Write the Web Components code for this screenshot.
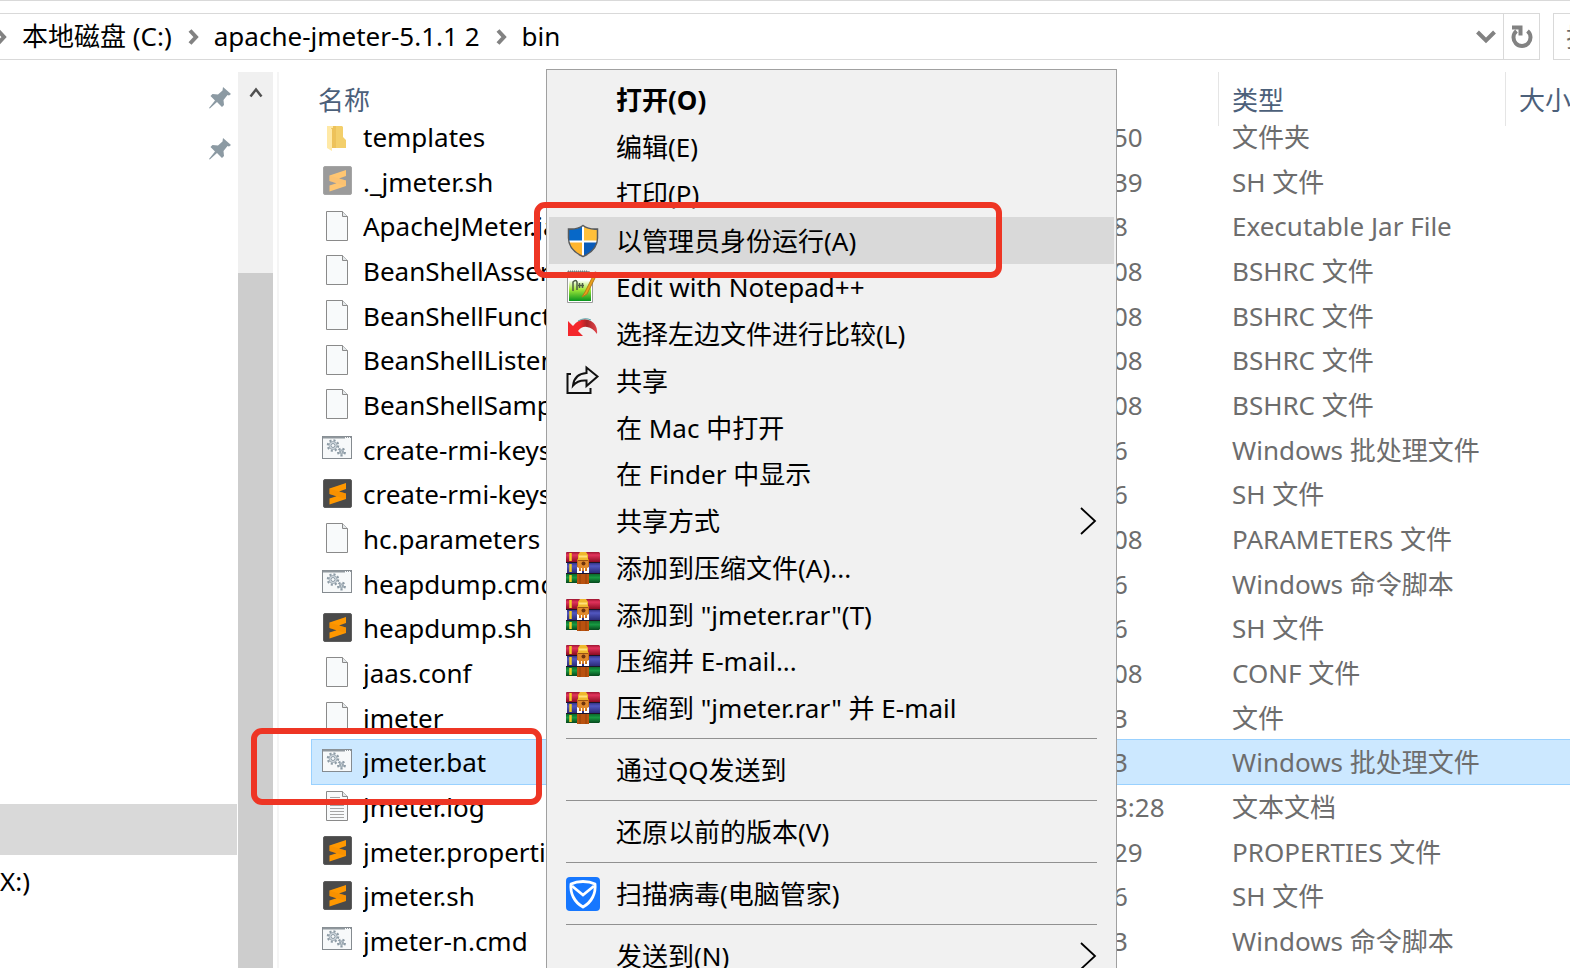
<!DOCTYPE html>
<html lang="zh-CN">
<head>
<meta charset="utf-8">
<title>bin</title>
<style>
  html, body {
    height: 100%;
    margin: 0;
  }
  body {
    overflow: hidden;
    background: #ffffff;
    color: #000000;
    font: 26px/34px "Noto Sans", "Noto Sans CJK SC", sans-serif;
  }
</style>
</head>
<body>
<explorer-window>
  <address-bar slot="address">
    <a slot="crumb" href="#c">本地磁盘 (C:)</a>
    <a slot="crumb" href="#jmeter">apache-jmeter-5.1.1 2</a>
    <a slot="crumb" href="#bin">bin</a>
  </address-bar>
  <nav-pane slot="nav"></nav-pane>
  <scroll-strip slot="nav"></scroll-strip>
  <file-list slot="files"></file-list>
  <context-menu slot="overlay"></context-menu>
  <mark-box slot="overlay" class="mark-admin"></mark-box>
  <mark-box slot="overlay" class="mark-file"></mark-box>
</explorer-window>

<script>
const gear = (cx, cy, r) => `
  <circle cx="${cx}" cy="${cy}" r="${r}" fill="none" stroke="#8d9ba5" stroke-width="2.500" stroke-dasharray="2 1.900"/>
  <circle cx="${cx}" cy="${cy}" r="${r - 1}" fill="#d3dbe1" stroke="#a3afb8"/>
  <circle cx="${cx}" cy="${cy}" r="${r / 2 - 0.5}" fill="#f5f8fa" stroke="#8d9ba5"/>`;

const sublime = `
  <rect x="0.5" y="0.5" width="28" height="28" rx="1.5" fill="#4a4a4a" stroke="#5d5d5d"/>
  <path d="M6.5 9.5 23 4v6l-7 2.5 7 2V20L6.5 25.5v-6l7-2.3-7-2.2z" fill="#ff9800"/>
  <path d="M6.5 15 13.5 17.2 23 20 23 14.5 16 12.5 6.5 9.5z" fill="#f08a00" opacity=".45"/>`;

const page = `
  <path d="M3.5.5h16l5 5v24h-21z" fill="#f8fafb" stroke="#8a8a8a"/>
  <path d="M19.5.5v5h5" fill="#e4e8ea" stroke="#8a8a8a"/>`;

const icons = {
  folder: { w: 29, h: 31, body: `
    <g transform="translate(0 4)">
      <path d="M8 1h11l1 1v10l3 3v8H8z" fill="#f3cf6b"/>
      <path d="M8 1h5v22H8z" fill="#edc25a"/>
      <path d="M4 1.5 9 4v22l-5-3z" fill="#ffe9a6"/>
      <path d="M4 1h6v2H4z" fill="#ffe9a6"/>
    </g>` },
  sublime: { w: 29, h: 29, body: sublime },
  faded: { w: 29, h: 29, body: `<g opacity=".55">${sublime}</g>` },
  page: { w: 29, h: 30, body: page },
  text: { w: 29, h: 30, body: page + `
    <path d="M7 6.500h10M7 10.500h14M7 14.500h14M7 17.500h14M7 20.500h14M7 23.500h14M7 26.500h14" stroke="#a5a5a5"/>` },
  batch: { w: 30, h: 25, body: `
    <g transform="translate(0 2)">
      <rect x=".5" y=".5" width="29" height="22" fill="#f7f9fa" stroke="#858b90"/>
      <path d="M1 1.500h22" stroke="#8f979d" stroke-width="2"/>
      <path d="M24 1.500h5" stroke="#8f979d" stroke-dasharray="1 1"/>
      ${gear(11, 9.5, 5)}${gear(19.5, 16, 3.2)}
    </g>` },
  shield: { w: 34, h: 34, body: `
    <clipPath id="s"><path d="M17 1.500c4 3 9 4 14.500 3.500V14C31.500 23 25 29 17 32.500 9 29 2.500 23 2.500 14V5C8 5.500 13 4.500 17 1.500z"/></clipPath>
    <g clip-path="url(#s)">
      <path d="M0 0h17v17H0z" fill="#0768c8"/><path d="M17 0h17v17H17z" fill="#ffc03a"/>
      <path d="M0 17h17v17H0z" fill="#ffb52e"/><path d="M17 17h17v17H17z" fill="#0a5bb8"/>
      <path d="M17 0v34M0 17.500h34" stroke="#fff" stroke-width="2"/>
    </g>
    <path d="M17 1.500c4 3 9 4 14.500 3.500V14C31.500 23 25 29 17 32.500 9 29 2.500 23 2.500 14V5C8 5.500 13 4.500 17 1.500z" fill="none" stroke="#585b5e" stroke-width="1.500"/>` },
  notepad: { w: 34, h: 34, body: `
    <linearGradient id="n" x2="0" y2="1"><stop offset="0.200" stop-color="#fff"/><stop offset="0.550" stop-color="#a4e93a"/><stop offset="1" stop-color="#08951e"/></linearGradient>
    <path d="M1.500 1.500h22l3 4v27h-25z" fill="#fff" stroke="#9a9a9a"/>
    <path d="M3 5h22v26H3z" fill="url(#n)"/>
    <path d="M2 1.500h20" stroke="#777" stroke-width="2" stroke-dasharray="1 1"/>
    <path d="M7 21v-9q3-3 4 0v8M12 15.500h6M13.500 13v5M16.500 13v5" fill="none" stroke="#4d5d44" stroke-width="1.500"/>
    <path d="M28 4 19 22l-3 5 5-3L30 6z" fill="#e9a11c" stroke="#b67b18"/>
    <path d="M27.500 4 29 1.500l3 1-2 4z" fill="#c52a35"/>` },
  compare: { w: 34, h: 34, body: `
    <linearGradient id="c"><stop offset="0.400" stop-color="#f4272c"/><stop offset="0.650" stop-color="#a92428"/><stop offset="1" stop-color="#e0444a"/></linearGradient>
    <path d="M2 4v15h15l-5-5q4-5 9-4 6 1 10 7 1-9-6-13Q15-1 7 9z" fill="url(#c)"/>
    <path d="M12 4q7-4 13-1" fill="none" stroke="#58a5aa"/>` },
  share: { w: 34, h: 34, body: `
    <path d="M5 10H1.500v19h23v-5" fill="none" stroke="#111" stroke-width="2"/>
    <path d="M7 21.500C8 13 13 9.500 20.500 9V3.500l11 9-11 9.500v-5.500C15 16 10 18 7 21.500z" fill="none" stroke="#111" stroke-width="2"/>` },
  rar: { w: 34, h: 34, body: `
    <linearGradient id="r" x2="0" y2="1"><stop offset="0" stop-color="#9c1530"/><stop offset=".3" stop-color="#e2335c"/><stop offset="1" stop-color="#8c0c22"/></linearGradient>
    <linearGradient id="b" x2="0" y2="1"><stop offset="0" stop-color="#34348a"/><stop offset=".3" stop-color="#5257c0"/><stop offset="1" stop-color="#2b2b78"/></linearGradient>
    <linearGradient id="g" x2="0" y2="1"><stop offset="0" stop-color="#0b6a2c"/><stop offset=".4" stop-color="#189a42"/><stop offset="1" stop-color="#06471c"/></linearGradient>
    <path d="M0 2q0-1 1-1h32l1 1v9H0z" fill="url(#r)"/>
    <path d="M1 12h33v10H1z" fill="url(#b)"/>
    <path d="M0 23h34v8l-1 1H0z" fill="url(#g)"/>
    <path d="M0 11.500h34M0 22.500h34" stroke="#1d1525"/>
    <path d="M4.500 2v8M4.500 13v8M4.500 24v7" stroke="#f2cd26" stroke-width="2.500"/>
    <path d="M11 8h12v12H11z" fill="#c9701b"/>
    <path d="M12 10V4l2-3h6l2 3v6z" fill="#efb82d"/>
    <path d="M13 5.500h8" stroke="#ffe07a" stroke-width="2"/>
    <path d="M12 9.500h10" stroke="#9a5414"/>
    <path d="M12 10h10v6l-3 3h-4l-3-3z" fill="#e08a2c"/>
    <circle cx="17.500" cy="12.500" r="2" fill="#6f340d"/>
    <path d="M11 23h12v10H11z" fill="#b9520f"/>
    <path d="M14 23v10M20 23v10" stroke="#94400b"/>
    <path d="M11 16v6h12v-6l-2 1v3h-2v-3h-1v5h-2v-5h-1v3h-2v-3z" fill="#fff"/>` },
  guard: { w: 34, h: 34, body: `
    <rect width="34" height="34" rx="4" fill="#1677ff"/>
    <path d="M17 4.500c4 0 8 .5 12 2.500 1 9-3 18-12 23C8 25 4 16 5 7c4-2 8-2.500 12-2.500z" fill="none" stroke="#fff" stroke-width="2.800" stroke-linejoin="round"/>
    <path d="M6 9l11 9 11-9" fill="none" stroke="#fff" stroke-width="2.800"/>` },
};

class UiIcon extends HTMLElement {
  connectedCallback() {
    const icon = icons[this.getAttribute('name')];
    this.attachShadow({ mode: 'open' }).innerHTML = `
      <style>
        :host { display: block; flex: none; }
        svg { display: block; }
      </style>
      <svg width="${icon.w}" height="${icon.h}" viewBox="0 0 ${icon.w} ${icon.h}" aria-hidden="true">${icon.body}</svg>
    `;
  }
}
customElements.define('ui-icon', UiIcon);

class ExplorerWindow extends HTMLElement {
  connectedCallback() {
    this.attachShadow({ mode: 'open' }).innerHTML = `
      <style>
        :host {
          display: flex;
          flex-direction: column;
          position: relative;
          height: 100%;
          overflow: hidden;
        }
        .body {
          display: flex;
          flex: 1;
          min-height: 0;
        }
        ::slotted(address-bar) { margin-bottom: 12px; }
        ::slotted(file-list) { flex: 1; min-width: 0; }
        ::slotted(context-menu) {
          position: absolute;
          left: 546px;
          top: 69px;
        }
        ::slotted(mark-box) { position: absolute; }
        ::slotted(.mark-admin) {
          left: 534px;
          top: 202px;
          width: 468px;
          height: 76px;
        }
        ::slotted(.mark-file) {
          left: 251px;
          top: 728px;
          width: 291px;
          height: 77px;
        }
      </style>
      <slot name="address"></slot>
      <div class="body">
        <slot name="nav"></slot>
        <slot name="files"></slot>
      </div>
      <slot name="overlay"></slot>
    `;
  }
}
customElements.define('explorer-window', ExplorerWindow);

class AddressBar extends HTMLElement {
  connectedCallback() {
    const root = this.attachShadow({ mode: 'open' });
    root.innerHTML = `
      <style>
        :host {
          display: flex;
          border-top: 1px solid #d9d9d9;
          padding-top: 12px;
        }
        .path {
          display: flex;
          flex: 1;
          align-items: center;
          box-sizing: border-box;
          height: 47px;
          border: 1px solid #d9d9d9;
          border-left: 0;
        }
        .crumbs { display: flex; flex: 1; align-items: center; margin-left: -4px; padding-bottom: 2px; }
        .crumb { display: flex; align-items: center; }
        .crumb svg { margin: 2px 15px 0 0; }
        .crumb + .crumb svg { margin-left: 16px; }
        ::slotted(a) { color: inherit; text-decoration: none; }
        button {
          display: flex;
          align-items: center;
          justify-content: center;
          height: 45px;
          padding: 0;
          border: 0;
          background: none;
        }
        .drop { width: 34px; }
        .refresh { width: 36px; border-left: 1px solid #d9d9d9; }
        svg { display: block; fill: none; stroke: #828282; stroke-width: 4; }
        input {
          box-sizing: border-box;
          flex: none;
          width: 300px;
          height: 47px;
          margin: 0 -283px 0 13px;
          padding: 0 0 0 12px;
          border: 1px solid #d9d9d9;
          border-radius: 0;
          outline: 0;
          font: inherit;
        }
        input::placeholder { color: #6d6d6d; opacity: 1; }
      </style>
      <div class="path">
        <nav class="crumbs"></nav>
        <button class="drop" aria-label="Previous locations">
          <svg width="20" height="14" viewBox="0 0 20 14"><path d="M1.500 2 10 10.500 18.500 2"/></svg>
        </button>
        <button class="refresh" aria-label="Refresh">
          <svg width="22" height="24" viewBox="0 0 22 24"><path d="M16.500 6A8.500 8.500 0 1 1 5.500 6M1 2.500h8.500v8"/></svg>
        </button>
      </div>
      <input type="text" placeholder="搜索" aria-label="Search">
    `;
    const crumbs = root.querySelector('.crumbs');
    [...this.children].forEach((link, i) => {
      link.slot = `crumb-${i}`;
      crumbs.insertAdjacentHTML('beforeend', `
        <span class="crumb">
          <svg width="11" height="16" viewBox="0 0 11 16"><path d="M2 1.500 8 8l-6 6.500"/></svg>
          <slot name="crumb-${i}"></slot>
        </span>`);
    });
  }
}
customElements.define('address-bar', AddressBar);

class NavPane extends HTMLElement {
  connectedCallback() {
    const pin = `
      <svg width="22" height="22" viewBox="0 0 22 22">
        <path d="M14 0l8 7-2 1.500-1.500-.5-4 5 .5 5-2 2-5-5L.800 21.500 0 21l6-7.500-4.500-4.500 2-2 5.500.5 4.500-4z" fill="#8c9aa3"/>
      </svg>`;
    this.attachShadow({ mode: 'open' }).innerHTML = `
      <style>
        :host { display: block; width: 238px; }
        a {
          display: flex;
          align-items: center;
          height: 51px;
          color: inherit;
          text-decoration: none;
        }
        .pinned a { justify-content: flex-end; padding-right: 7px; }
        .drives { margin-top: 630px; }
        .current { margin-right: 1px; background: #d9d9d9; }
      </style>
      <div class="pinned">
        <a href="#pin1" aria-label="Pinned folder">${pin}</a>
        <a href="#pin2" aria-label="Pinned folder">${pin}</a>
      </div>
      <div class="drives">
        <a class="current" href="#c" aria-label="Current drive"></a>
        <a href="#x">X:)</a>
      </div>
    `;
  }
}
customElements.define('nav-pane', NavPane);

class ScrollStrip extends HTMLElement {
  connectedCallback() {
    this.attachShadow({ mode: 'open' }).innerHTML = `
      <style>
        :host {
          display: flex;
          flex-direction: column;
          width: 35px;
          margin-right: 4px;
          background: #f0f0f0;
        }
        button {
          display: flex;
          justify-content: center;
          height: 201px;
          padding: 15px 0 0;
          border: 0;
          background: none;
        }
        .thumb { flex: 1; background: #cdcdcd; }
      </style>
      <button aria-label="Scroll up">
        <svg width="14" height="11" viewBox="0 0 14 11"><path d="M1.500 9.500 7 2.500l5.500 7" fill="none" stroke="#505050" stroke-width="2.500"/></svg>
      </button>
      <div class="thumb"></div>
    `;
  }
}
customElements.define('scroll-strip', ScrollStrip);

const files = [
  ['folder', 'templates', '50', '文件夹'],
  ['faded', '._jmeter.sh', '39', 'SH 文件'],
  ['page', 'ApacheJMeter.jar', '8', 'Executable Jar File'],
  ['page', 'BeanShellAssert', '08', 'BSHRC 文件'],
  ['page', 'BeanShellFunction', '08', 'BSHRC 文件'],
  ['page', 'BeanShellListener', '08', 'BSHRC 文件'],
  ['page', 'BeanShellSample', '08', 'BSHRC 文件'],
  ['batch', 'create-rmi-keys.bat', '6', 'Windows 批处理文件'],
  ['sublime', 'create-rmi-keys.sh', '6', 'SH 文件'],
  ['page', 'hc.parameters', '08', 'PARAMETERS 文件'],
  ['batch', 'heapdump.cmd', '6', 'Windows 命令脚本'],
  ['sublime', 'heapdump.sh', '6', 'SH 文件'],
  ['page', 'jaas.conf', '08', 'CONF 文件'],
  ['page', 'jmeter', '3', '文件'],
  ['batch', 'jmeter.bat', '3', 'Windows 批处理文件'],
  ['text', 'jmeter.log', '3:28', '文本文档'],
  ['sublime', 'jmeter.properties', '29', 'PROPERTIES 文件'],
  ['sublime', 'jmeter.sh', '6', 'SH 文件'],
  ['batch', 'jmeter-n.cmd', '3', 'Windows 命令脚本'],
];

class FileList extends HTMLElement {
  connectedCallback() {
    const rows = files.map(([icon, name, date, type]) => `
      <tr${name === 'jmeter.bat' ? ' class="selected"' : ''}>
        <td><div class="name"><span class="icon"><ui-icon name="${icon}"></ui-icon></span><span class="label">${name}</span></div></td>
        <td class="date">${date}</td>
        <td>${type}</td>
        <td></td>
      </tr>`).join('');
    this.attachShadow({ mode: 'open' }).innerHTML = `
      <style>
        :host {
          display: block;
          overflow: hidden;
          border-left: 2px solid #f5f5f5;
          padding-left: 33px;
        }
        table {
          width: 100%;
          table-layout: fixed;
          border-collapse: collapse;
          white-space: nowrap;
        }
        .col-name { width: 234px; }
        .col-date { width: 672px; }
        .col-size { width: 65px; }
        th {
          position: relative;
          padding: 0;
          color: #4c607a;
          font-weight: normal;
          text-align: left;
          vertical-align: bottom;
        }
        th span { display: block; height: 31px; line-height: 34px; }
        th:first-child { padding-left: 6px; }
        th:nth-child(n + 3), td:nth-child(n + 3) { padding-left: 14px; }
        /* the dividers run past the header, over the first row */
        th:nth-child(n + 3)::before {
          content: "";
          position: absolute;
          left: 0;
          top: 0;
          width: 1px;
          height: 54px;
          background: #e5e5e5;
        }
        thead tr { height: 42px; }
        tbody tr { height: 45px; }
        tbody tr:nth-child(3n) { height: 44px; }
        td { padding: 0; color: #6d6d6d; }
        .date { padding-left: 567px; }
        .name { display: flex; align-items: center; color: #000000; }
        .icon { display: flex; justify-content: center; width: 30px; height: 31px; margin: 0 11px 0 10px; }
        .label { flex: 1; min-width: 0; overflow: hidden; }
        .selected { background: #cce8ff; outline: 1px solid #99d1ff; }
      </style>
      <table>
        <colgroup><col class="col-name"><col class="col-date"><col><col class="col-size"></colgroup>
        <thead><tr>
          <th><span>名称</span></th><th></th><th><span>类型</span></th><th><span>大小</span></th>
        </tr></thead>
        <tbody>${rows}</tbody>
      </table>
    `;
  }
}
customElements.define('file-list', FileList);

const groups = [
  [
    { label: '打开(O)', kind: 'default' },
    { label: '编辑(E)' },
    { label: '打印(P)' },
    { label: '以管理员身份运行(A)', icon: 'shield', kind: 'active' },
    { label: 'Edit with Notepad++', icon: 'notepad' },
    { label: '选择左边文件进行比较(L)', icon: 'compare' },
    { label: '共享', icon: 'share' },
    { label: '在 Mac 中打开' },
    { label: '在 Finder 中显示' },
    { label: '共享方式', kind: 'more' },
    { label: '添加到压缩文件(A)...', icon: 'rar' },
    { label: '添加到 "jmeter.rar"(T)', icon: 'rar' },
    { label: '压缩并 E-mail...', icon: 'rar' },
    { label: '压缩到 "jmeter.rar" 并 E-mail', icon: 'rar' },
  ],
  [{ label: '通过QQ发送到' }],
  [{ label: '还原以前的版本(V)' }],
  [{ label: '扫描病毒(电脑管家)', icon: 'guard' }],
  [{ label: '发送到(N)', kind: 'more' }],
];

class ContextMenu extends HTMLElement {
  connectedCallback() {
    const item = ({ label, icon, kind = '' }) => `
      <button role="menuitem" class="${kind}">
        <span class="icon">${icon ? `<ui-icon name="${icon}"></ui-icon>` : ''}</span>
        <span class="label">${label}</span>
        ${kind === 'more' ? '<svg width="17" height="28" viewBox="0 0 17 28"><path d="M1 1l14 13L1 27" fill="none" stroke="#000" stroke-width="1.800"/></svg>' : ''}
      </button>`;
    this.attachShadow({ mode: 'open' }).innerHTML = `
      <style>
        :host {
          display: block;
          box-sizing: border-box;
          width: 571px;
          padding: 6px 2px;
          border: 1px solid #a0a0a0;
          background: #f1f1f1;
        }
        button {
          display: flex;
          align-items: center;
          width: 100%;
          height: 47px;
          padding: 0 17px;
          border: 0;
          background: none;
          color: inherit;
          font: inherit;
          text-align: left;
        }
        button:nth-child(4n + 1) { height: 46px; }
        button:first-child { height: 47px; }
        .default { font-weight: bold; }
        .active { background: #d9d9d9; }
        .icon { width: 34px; margin-right: 16px; }
        .label { flex: 1; }
        hr {
          height: 1px;
          margin: 7px 17px;
          border: 0;
          background: #919191;
        }
      </style>
      ${groups.map(group => `<div>${group.map(item).join('')}</div>`).join('<hr>')}
    `;
    this.setAttribute('role', 'menu');
  }
}
customElements.define('context-menu', ContextMenu);

class MarkBox extends HTMLElement {
  connectedCallback() {
    this.attachShadow({ mode: 'open' }).innerHTML = `
      <style>
        :host {
          display: block;
          box-sizing: border-box;
          border: 6px solid #ee3524;
          border-radius: 11px;
          pointer-events: none;
        }
      </style>
    `;
  }
}
customElements.define('mark-box', MarkBox);
</script>
</body>
</html>
